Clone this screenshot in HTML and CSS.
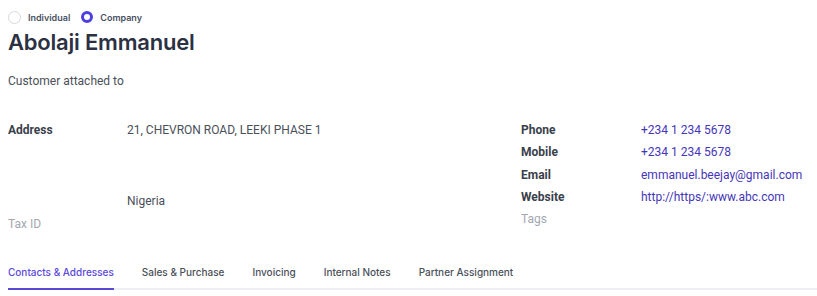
FILE: index.html
```html
<!DOCTYPE html>
<html lang="en">
<head>
    <meta charset="UTF-8">
    <title>Abolaji Emmanuel</title>
    <link rel="stylesheet" href="styles.css">
</head>
<body>
    <div class="partner-form">
        <div class="company-type">
            <label class="radio"><span class="dot"></span>Individual</label>
            <label class="radio checked"><span class="dot"></span>Company</label>
        </div>
        <h1 class="partner-name">Abolaji Emmanuel</h1>
        <div class="attached">Customer attached to</div>

        <div class="groups">
            <div class="group">
                <div class="field address">
                    <div class="label">Address</div>
                    <div class="value">
                        <div class="line">21, CHEVRON ROAD, LEEKI PHASE 1</div>
                        <div class="line"></div>
                        <div class="line"></div>
                        <div class="line">Nigeria</div>
                    </div>
                </div>
                <div class="field">
                    <div class="label muted">Tax ID</div>
                    <div class="value"></div>
                </div>
            </div>
            <div class="group">
                <div class="field">
                    <div class="label">Phone</div>
                    <div class="value link">+234 1 234 5678</div>
                </div>
                <div class="field">
                    <div class="label">Mobile</div>
                    <div class="value link">+234 1 234 5678</div>
                </div>
                <div class="field">
                    <div class="label">Email</div>
                    <div class="value link">emmanuel.beejay@gmail.com</div>
                </div>
                <div class="field">
                    <div class="label">Website</div>
                    <div class="value link">http://https/:www.abc.com</div>
                </div>
                <div class="field">
                    <div class="label muted">Tags</div>
                    <div class="value"></div>
                </div>
            </div>
        </div>

        <div class="tabs">
            <div class="tab active">Contacts &amp; Addresses</div>
            <div class="tab">Sales &amp; Purchase</div>
            <div class="tab">Invoicing</div>
            <div class="tab">Internal Notes</div>
            <div class="tab">Partner Assignment</div>
        </div>
    </div>
</body>
</html>
```

FILE: styles.css
```css
body {
    margin: 0;
    background-color: #ffffff;
    font-family: Roboto, "Liberation Sans", sans-serif;
    color: #4a4f59;
}
.partner-form {
    padding: 10px 0 0 8px;
}
.company-type {
    display: flex;
    gap: 11px;
    height: 14px;
    align-items: center;
}
.radio {
    display: flex;
    align-items: center;
    gap: 7px;
    font-family: Inter, sans-serif;
    font-size: 9px;
    font-weight: 600;
    color: #495063;
}
.radio .dot {
    width: 11px;
    height: 11px;
    border-radius: 50%;
    border: 1px solid #d6d8e0;
    background-color: #ffffff;
}
.radio.checked .dot {
    width: 6px;
    height: 6px;
    border: 3.5px solid #4d3fe0;
}
.partner-name {
    margin: 3px 0 0 0;
    font-family: Inter, sans-serif;
    font-size: 22px;
    font-weight: 600;
    letter-spacing: -0.2px;
    color: #2b3142;
    line-height: 30px;
}
.attached {
    margin-top: 17px;
    font-size: 12px;
    color: #4a4f59;
}
.groups {
    display: grid;
    grid-template-columns: 513px 1fr;
    margin-top: 31px;
}
.field {
    display: grid;
    grid-template-columns: 119px 1fr;
    font-size: 12px;
    line-height: 22.3px;
}
.group + .group .field {
    grid-template-columns: 120px 1fr;
}
.label {
    font-weight: 700;
    color: #3a3f4c;
}
.label.muted {
    font-weight: 400;
    color: #a3a7b0;
}
.value .line {
    min-height: 23.5px;
}
.link {
    color: #4536b8;
}
.tabs {
    display: flex;
    margin-top: 27px;
    border-bottom: 2px solid #eeeef7;
}
.tab {
    font-family: Inter, sans-serif;
    font-size: 10px;
    font-weight: 500;
    color: #4a4f59;
    padding: 4px 0 10px 0;
    margin-right: 28px;
    margin-bottom: -2px;
    border-bottom: 2px solid transparent;
}
.tab.active {
    color: #5a48d8;
    border-bottom-color: #5a48d8;
}
```
